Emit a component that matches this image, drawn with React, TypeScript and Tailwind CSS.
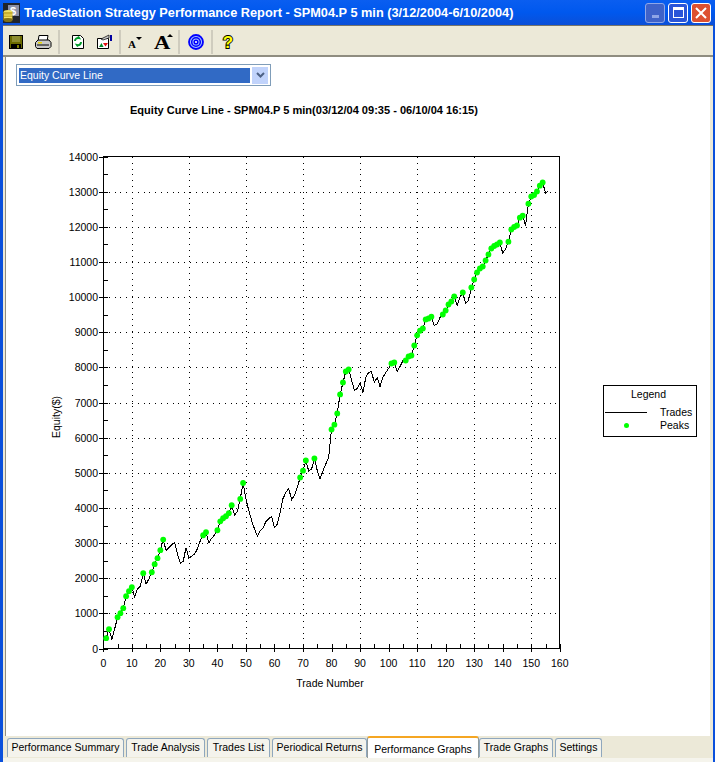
import React from 'react';

// equity after each trade, read off the chart (index 0 = trade 1)
const equity = [
  294, 550, 256, 560, 890, 1005, 1147, 1488, 1630, 1744, 1460, 1697, 1773, 2142, 1830, 1980, 2170, 2400, 2570, 2797,
  3100, 2787, 2870, 2950, 3024, 2690, 2427, 2475, 2870, 2570, 2626, 2690, 2835, 3070, 3223, 3308, 3005, 3138, 3232, 3365,
  3620, 3707, 3764, 3850, 4076, 3800, 3896, 4256, 4710, 4254, 3922, 3637, 3400, 3193, 3353, 3440, 3608, 3700, 3756, 3438,
  3543, 3876, 4270, 4440, 4553, 4235, 4368, 4583, 4866, 5060, 5350, 5051, 5108, 5407, 5060, 4823, 5060, 5250, 5435, 6232,
  6370, 6690, 7230, 7570, 7883, 7940, 7650, 7337, 7400, 7570, 7285, 7712, 7854, 7877, 7570, 7712, 7456, 7712, 7854, 7968,
  8110, 8139, 7877, 8025, 8190, 8196, 8310, 8338, 8622, 8913, 9043, 9107, 9362, 9391, 9442, 9186, 9234, 9420, 9505, 9619,
  9790, 9875, 10017, 9755, 9988, 10131, 9832, 9897, 10273, 10501, 10700, 10814, 10871, 11042, 11212, 11383, 11454, 11497, 11554, 11255,
  11368, 11576, 11924, 11995, 12038, 12259, 12316, 12032, 12658, 12863, 12905, 13005, 13170, 13261, 12962, 13028,
];

const peakRanges = [[1, 2], [5, 10], [14, 14], [17, 21], [35, 36], [40, 45], [48, 49], [69, 71], [74, 74], [80, 86], [101, 102], [106, 115], [119, 123], [126, 126], [129, 139], [142, 147], [149, 154]];

const px = (trade: number) => 103.3 + trade * 2.853;
const py = (value: number) => 649.5 - value * 0.03514;
const isPeak = (t: number) => peakRanges.some(([a, b]) => t >= a && t <= b);

const yLabels = Array.from({ length: 15 }, (_, i) => i * 1000);
const xLabels = Array.from({ length: 17 }, (_, i) => i * 10);
const xTicks = Array.from({ length: 33 }, (_, i) => i * 5);
const yTicks = Array.from({ length: 29 }, (_, i) => i * 500);
const gridX = [10, 30, 50, 70, 90, 110, 130, 150];

const tabs = [
  { label: 'Performance Summary', cls: 'w-[117px]' },
  { label: 'Trade Analysis', cls: 'w-[79px] ml-[2px]' },
  { label: 'Trades List', cls: 'w-[63px] ml-[2px]' },
  { label: 'Periodical Returns', cls: 'w-[95px] ml-[2px]' },
  { label: 'Performance Graphs', cls: 'w-[112px]', active: true },
  { label: 'Trade Graphs', cls: 'w-[74px]' },
  { label: 'Settings', cls: 'w-[47px] ml-[2px]' },
];

const Chart = () => (
  <svg viewBox="40 150 535 545" className="w-[535px] h-[545px] block shrink-0 ml-[34px] mt-[32px]">
    {yLabels.slice(1, -1).map((v) => (
      <line key={v} x1={103} x2={559} y1={Math.round(py(v)) + 0.5} y2={Math.round(py(v)) + 0.5} stroke="#000" strokeDasharray="1 4.8" shapeRendering="crispEdges" />
    ))}
    {gridX.map((t) => (
      <line key={t} x1={Math.round(px(t)) + 0.5} x2={Math.round(px(t)) + 0.5} y1={158} y2={649} stroke="#000" strokeDasharray="1 4.8" shapeRendering="crispEdges" />
    ))}
    <rect x={103.5} y={157.5} width={456} height={492} fill="none" stroke="#000" shapeRendering="crispEdges" />
    {yTicks.map((v) => (
      <line key={v} x1={v % 1000 === 0 ? 99 : 103} x2={108} y1={Math.round(py(v)) + 0.5} y2={Math.round(py(v)) + 0.5} stroke="#000" shapeRendering="crispEdges" />
    ))}
    {xTicks.map((t) => (
      <line key={t} x1={Math.round(px(t)) + 0.5} x2={Math.round(px(t)) + 0.5} y1={645} y2={t % 10 === 0 ? 653 : 650} stroke="#000" shapeRendering="crispEdges" />
    ))}
    <polyline
      points={equity.map((v, i) => `${px(i + 1).toFixed(1)},${py(v).toFixed(1)}`).join(' ')}
      fill="none"
      stroke="#000"
      strokeWidth={1}
      shapeRendering="crispEdges"
    />
    {equity.map((v, i) =>
      isPeak(i + 1) ? <circle key={i} cx={px(i + 1)} cy={py(v)} r={2.9} fill="#00ff00" /> : null
    )}
    <g fontSize="10.5" fill="#000">
      {yLabels.map((v) => (
        <text key={v} x={98} y={py(v) + 4} textAnchor="end">{v}</text>
      ))}
      {xLabels.map((t) => (
        <text key={t} x={px(t)} y={668} textAnchor="middle">{t}</text>
      ))}
      <text x={330} y={688} textAnchor="middle">Trade Number</text>
      <text transform="translate(60 418) rotate(-90)" textAnchor="middle">Equity($)</text>
    </g>
  </svg>
);

const Legend = () => (
  <div className="ml-[28px] mt-[268px] w-[94px] h-[52px] border border-black shrink-0 flex flex-col text-[10.5px] leading-[14px] text-black">
    <div className="text-center pt-[1px] pr-[3px]">Legend</div>
    <div className="flex items-center mt-[4px] h-[14px]">
      <div className="ml-[1px] w-[42px] h-px bg-black" />
      <span className="ml-[13px]">Trades</span>
    </div>
    <div className="flex items-center h-[14px] -mt-px">
      <div className="ml-[20px] w-[5px] h-[5px] rounded-full bg-[#00ff00]" />
      <span className="ml-[31px]">Peaks</span>
    </div>
  </div>
);

const Sep = () => <div className="w-[2px] h-[24px] bg-[#cfccbe] mx-[2px] shrink-0" />;

const Btn = ({ children, cls = '' }: { children: React.ReactNode; cls?: string }) => (
  <div className={`w-[26px] h-[24px] flex items-center justify-center shrink-0 ${cls}`}>{children}</div>
);

const Toolbar = () => (
  <div className="h-[32px] pt-[2px] bg-[#ece9d8] border-t border-t-[#77756a] border-b-[2px] border-b-[#8f8d80] flex items-center pr-[3px] shrink-0">
    <Btn>
      <svg width="16" height="16" viewBox="0 0 16 16" shapeRendering="crispEdges">
        <rect x="1.5" y="1.5" width="13" height="13" fill="#6b6b00" stroke="#000" />
        <rect x="4" y="2" width="8" height="6" fill="#8c8c30" />
        <rect x="3" y="10" width="10" height="4" fill="#000" />
        <rect x="9" y="11" width="2" height="3" fill="#808000" />
      </svg>
    </Btn>
    <Btn cls="ml-px">
      <svg width="18" height="16" viewBox="0 0 18 16">
        <path d="M5 1.5h9l-1 6H4z" fill="#fff" stroke="#000" />
        <path d="M1.5 8.5L4 6h11l2 2.5v4l-2 2H3l-1.5-2z" fill="#c8c8c8" stroke="#000" />
        <path d="M3 11h12" stroke="#000" />
        <rect x="4" y="8" width="4" height="1.5" fill="#e8d800" />
      </svg>
    </Btn>
    <Sep />
    <Btn cls="ml-[3px]">
      <svg width="14" height="16" viewBox="0 0 14 16">
        <path d="M1.5 1.5h8l3 3v10h-11z" fill="#fff" stroke="#000" />
        <path d="M4 7c0-2 2-3.500 4-3l-1-1.500M10 8c0 2.500-2 3.500-4 3l1 1.500" fill="none" stroke="#009a2a" strokeWidth="2" />
      </svg>
    </Btn>
    <Btn>
      <svg width="17" height="16" viewBox="0 0 17 16">
        <path d="M1.500 4.500h11v10h-11z" fill="#fff" stroke="#000" />
        <path d="M3 13l2.500-4 2 4z" fill="#008a2a" />
        <path d="M7 9h5l-2.500 3.500z" fill="#e01010" />
        <path d="M5 5l8-4v3l-6 2z" fill="#c8c8c8" stroke="#000" strokeWidth="0.7" />
        <rect x="14" y="1" width="2" height="6" fill="#0000a0" />
      </svg>
    </Btn>
    <Sep />
    <Btn cls="-ml-px">
      <svg width="16" height="16" viewBox="0 0 16 16">
        <text x="1" y="14" fontFamily="'Liberation Serif', serif" fontWeight="700" fontSize="11" fill="#000">A</text>
        <path d="M9 3h6l-3 3z" fill="#000" />
      </svg>
    </Btn>
    <Btn cls="ml-[2px]">
      <svg width="20" height="18" viewBox="0 0 20 18" className="overflow-visible">
        <text transform="translate(1 16) scale(1.25 1)" fontFamily="'Liberation Serif', serif" fontWeight="700" fontSize="18" fill="#000">A</text>
        <path d="M14 4l3-3 3 3z" fill="#000" />
      </svg>
    </Btn>
    <Sep />
    <Btn cls="ml-px">
      <svg width="16" height="16" viewBox="0 0 16 16" fill="none" stroke="#0000ff">
        <circle cx="8" cy="8" r="7" strokeWidth="1.800" fill="#a0c0ff" />
        <circle cx="8" cy="8" r="4.300" strokeWidth="1.500" />
        <circle cx="8" cy="8" r="1.800" strokeWidth="1.500" fill="#fff" />
      </svg>
    </Btn>
    <Sep />
    <Btn>
      <svg width="14" height="18" viewBox="0 0 14 18">
        <text x="7" y="15" textAnchor="middle" fontFamily="'Liberation Sans', sans-serif" fontWeight="700" fontSize="17" fill="#ffff00" stroke="#000" strokeWidth="1.800" paintOrder="stroke">?</text>
      </svg>
    </Btn>
  </div>
);

const AppIcon = () => (
  <svg width="17" height="20" viewBox="0 0 17 20" className="shrink-0">
    <rect x="0" y="0" width="17" height="20" fill="#20242c" />
    <rect x="5" y="2" width="11" height="11" fill="#8a90a8" />
    <text x="7" y="12" fontSize="11" fontWeight="700" fill="#fff" fontFamily="'Liberation Sans', sans-serif">$</text>
    <ellipse cx="5" cy="9" rx="4.500" ry="2" fill="#f0e060" />
    <rect x="0.500" y="9" width="9" height="8" fill="#c8b030" />
    <ellipse cx="5" cy="17" rx="4.500" ry="2" fill="#807018" />
    <path d="M1 12h8M1 14.500h8" stroke="#f0e060" />
  </svg>
);

export default function App() {
  return (
    <div className="w-[715px] h-[762px] flex flex-col bg-[#0a50dc] font-['Liberation_Sans',Arial,sans-serif] overflow-hidden">
      <div className="h-[25px] pl-[3px] pr-[4px] flex items-center shrink-0 bg-linear-to-b from-[#0a5ef0] via-[#0058ee] to-[#0a4fd8]">
        <AppIcon />
        <span className="ml-[4px] text-white font-bold text-[12.75px] whitespace-nowrap">
          TradeStation Strategy Performance Report - SPM04.P 5 min (3/12/2004-6/10/2004)
        </span>
        <div className="ml-auto flex gap-[3px]">
          <div className="w-[20px] h-[20px] rounded-[3px] border border-[#8ea6e8] bg-[#3f62c8] flex items-end justify-center pb-[4px]">
            <div className="w-[7px] h-[3px] bg-[#8fa5e6]" />
          </div>
          <div className="w-[20px] h-[20px] rounded-[3px] border border-white bg-[#2a55d8] flex items-center justify-center">
            <div className="w-[11px] h-[11px] border border-white border-t-[3px]" />
          </div>
          <div className="w-[20px] h-[20px] rounded-[3px] border border-white bg-[#dd5030] flex items-center justify-center">
            <svg width="12" height="12" viewBox="0 0 12 12" stroke="#fff" strokeWidth="2">
              <path d="M1 1l10 10M11 1L1 11" />
            </svg>
          </div>
        </div>
      </div>

      <div className="flex-1 min-h-0 ml-[3px] mr-[2px] bg-[#ece9d8] flex flex-col">
        <Toolbar />
        <div className="flex-1 min-h-0 ml-[2px] mr-[3px] bg-white border-l border-l-[#8f8d80] flex flex-col text-black">
          <div className="ml-[10px] mt-[7px] w-[255px] h-[22px] border border-[#7f9db9] flex items-center px-[2px] gap-[2px] shrink-0">
            <div className="w-[231px] h-[15px] bg-[#316ac5] text-white text-[10.5px] leading-[15px] pl-[1px]">Equity Curve Line</div>
            <div className="w-[16px] h-[17px] bg-[#c1d3fb] flex items-center justify-center">
              <svg width="9" height="7" viewBox="0 0 9 7" fill="none" stroke="#4d6185" strokeWidth="2">
                <path d="M1 1l3.500 3.500L8 1" />
              </svg>
            </div>
          </div>
          <div className="mt-[17px] ml-[124px] text-[11.05px] leading-[14px] font-bold whitespace-nowrap shrink-0">
            Equity Curve Line - SPM04.P 5 min(03/12/04 09:35 - 06/10/04 16:15)
          </div>
          <div className="flex items-start">
            <Chart />
            <Legend />
          </div>
        </div>
        <div className="h-[22px] flex items-start pl-[4px] bg-[#ece9d8] shrink-0">
          {tabs.map((t) =>
            t.active ? (
              <div key={t.label} className={`${t.cls} h-[22px] bg-white border-t-[2px] border-t-[#f5a623] border-x border-x-[#919b9c] rounded-t-[3px] text-[10.5px] leading-[23px] text-center whitespace-nowrap text-black`}>
                {t.label}
              </div>
            ) : (
              <div key={t.label} className={`${t.cls} h-[19px] mt-[2px] bg-[#f4f3ec] border border-b-0 border-[#8fa7bd] rounded-t-[3px] text-[10.5px] leading-[17px] text-center whitespace-nowrap text-black`}>
                {t.label}
              </div>
            )
          )}
        </div>
        <div className="h-[4px] bg-[#f5f4ec] shrink-0" />
      </div>
    </div>
  );
}
